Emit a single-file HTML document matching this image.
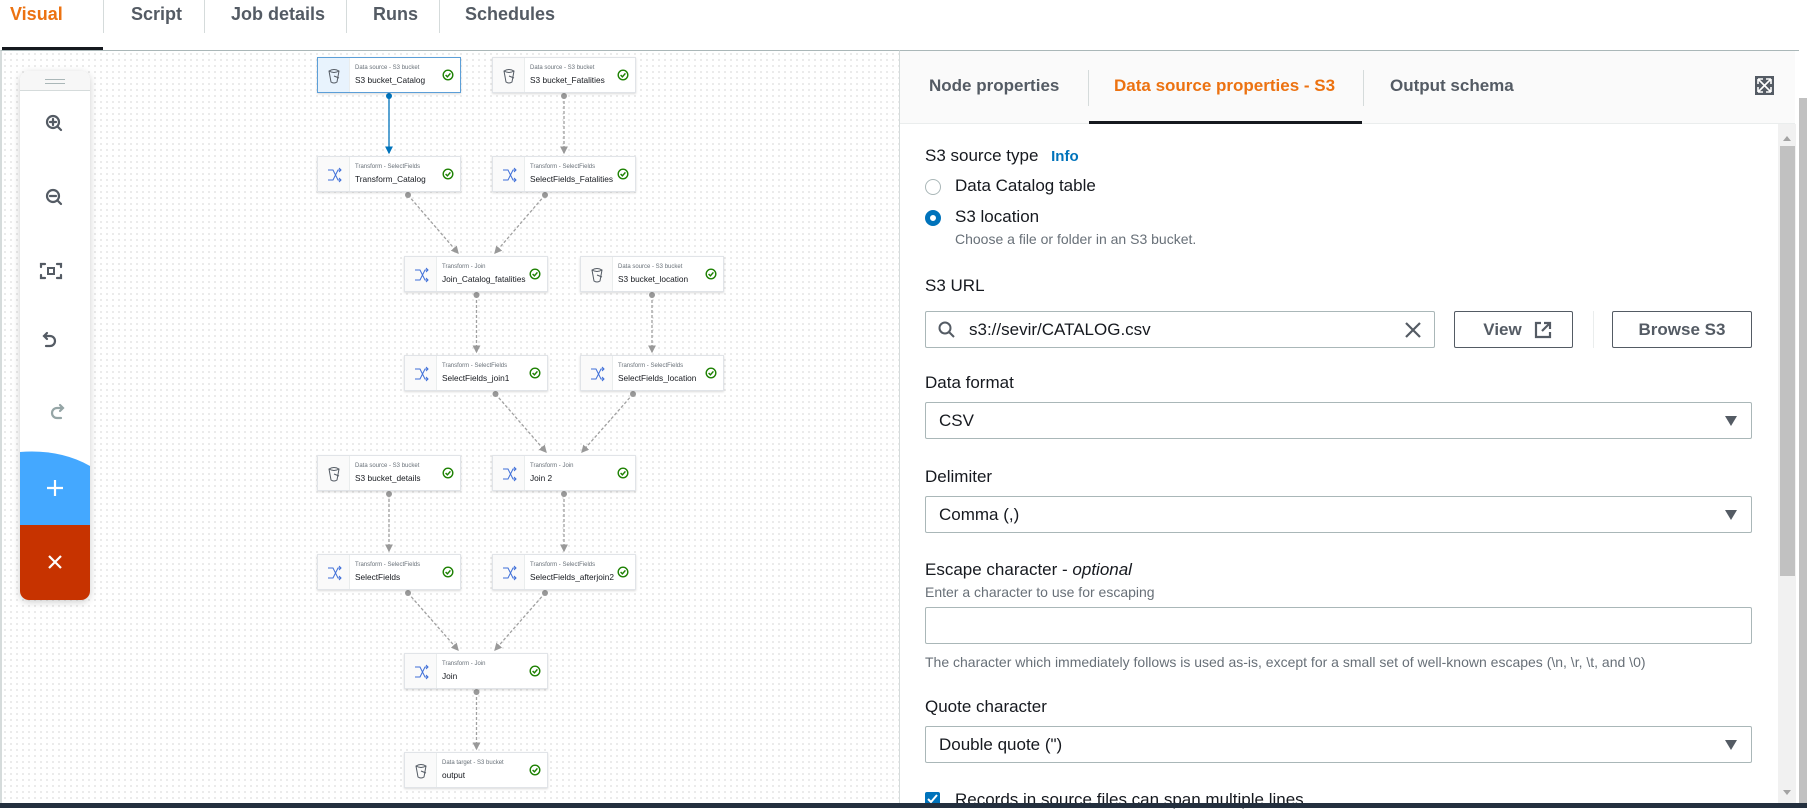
<!DOCTYPE html>
<html><head><meta charset="utf-8"><style>
*{box-sizing:border-box;margin:0;padding:0}
body{width:1807px;height:808px;overflow:hidden;background:#fff;font-family:"Liberation Sans",sans-serif;color:#16191f;position:relative}
.abs{position:absolute}
.tab{position:absolute;top:2px;font-size:18px;font-weight:bold;color:#545b64;height:24px;line-height:24px}
.vsep{position:absolute;width:1px;background:#d5dbdb}
#canvas{position:absolute;left:0;top:50px;width:899px;height:753px;border-top:1px solid #aab7b8;border-left:2px solid #d5dbdb;background-color:#fff;background-image:radial-gradient(circle,#dedede 0.7px,transparent 1px);background-size:6px 6px}
.node{position:absolute;width:144px;height:36px;background:#fff;border:1px solid #e1e4e8;box-shadow:0 1px 2px rgba(0,0,0,.15)}
.node .ic{position:absolute;left:0;top:0;width:32px;height:100%;background:#fafafa;border-right:1px solid #eaeded}
.node .st{position:absolute;left:37px;top:7px;font-size:6px;color:#687078;white-space:nowrap}
.node .tt{position:absolute;left:37px;top:17px;font-size:8.3px;color:#16191f;white-space:nowrap}
.node .ok{position:absolute;left:124px;top:11px}
.node.sel{border-color:#5c9fd8}
.node.sel .ic{background:#e8f3fd}
#tb{position:absolute;left:20px;top:71px;width:70px;height:529px;background:#fff;border-radius:9px;box-shadow:0 2px 8px rgba(0,0,0,.2);overflow:hidden}
.lbl{position:absolute;left:925px;font-size:17px;color:#16191f}
.desc{position:absolute;left:925px;font-size:14px;color:#687078}
.box{position:absolute;left:925px;width:827px;height:37px;border:1px solid #aab7b8;border-radius:2px;background:#fff;font-size:17px;padding-left:13px;line-height:35px}
.box .arr{position:absolute;right:14px;top:13px;width:0;height:0;border-left:6px solid transparent;border-right:6px solid transparent;border-top:10px solid #545b64}
.btn{position:absolute;top:311px;height:37px;border:1px solid #545b64;border-radius:2px;font-size:17px;font-weight:bold;color:#545b64;text-align:center;line-height:35px}
</style></head><body>

<div class="tab" style="left:10px;color:#ec7211">Visual</div>
<div class="tab" style="left:131px">Script</div>
<div class="tab" style="left:231px">Job details</div>
<div class="tab" style="left:373px">Runs</div>
<div class="tab" style="left:465px">Schedules</div>
<div class="vsep" style="left:103px;top:0;height:33px"></div>
<div class="vsep" style="left:204px;top:0;height:33px"></div>
<div class="vsep" style="left:346px;top:0;height:33px"></div>
<div class="vsep" style="left:439px;top:0;height:33px"></div>
<div class="abs" style="left:2px;top:47px;width:101px;height:3px;background:#16191f"></div>

<div id="canvas"></div>

<svg class="abs" style="left:0;top:0" width="899" height="808">
<defs>
<marker id="ag" markerWidth="6" markerHeight="6" refX="5" refY="3" orient="auto"><path d="M0,0 L6,3 L0,6z" fill="#999"/></marker>
<marker id="ab" markerWidth="6" markerHeight="6" refX="5" refY="3" orient="auto"><path d="M0,0 L6,3 L0,6z" fill="#0073bb"/></marker>
</defs>
<g stroke="#a0a0a0" stroke-width="1.3" stroke-dasharray="3,2" fill="none" marker-end="url(#ag)">
<line x1="564" y1="96" x2="564" y2="153"/>
<line x1="408" y1="195" x2="458" y2="253"/>
<line x1="545" y1="195" x2="495" y2="253"/>
<line x1="476.5" y1="295" x2="476.5" y2="352"/>
<line x1="652" y1="295" x2="652" y2="352"/>
<line x1="495.5" y1="394" x2="546" y2="452"/>
<line x1="633" y1="394" x2="582" y2="452"/>
<line x1="389" y1="494" x2="389" y2="551"/>
<line x1="564" y1="494" x2="564" y2="551"/>
<line x1="408" y1="593" x2="458" y2="650"/>
<line x1="545" y1="593" x2="495" y2="650"/>
<line x1="476.5" y1="692" x2="476.5" y2="749"/>
</g>
<line x1="389" y1="96" x2="389" y2="153" stroke="#0073bb" stroke-width="1.3" marker-end="url(#ab)"/>
<g fill="#999">
<circle cx="564" cy="96" r="3"/><circle cx="408" cy="195" r="3"/><circle cx="545" cy="195" r="3"/>
<circle cx="476.5" cy="295" r="3"/><circle cx="652" cy="295" r="3"/><circle cx="495.5" cy="394" r="3"/>
<circle cx="633" cy="394" r="3"/><circle cx="389" cy="494" r="3"/><circle cx="564" cy="494" r="3"/>
<circle cx="408" cy="593" r="3"/><circle cx="545" cy="593" r="3"/><circle cx="476.5" cy="692" r="3"/>
</g>
<circle cx="389" cy="96" r="3" fill="#0073bb"/>
</svg>

<div class="node sel" style="left:317px;top:57px"><div class="ic"><svg width="32" height="36"><path d="M11,13 L13,24 Q16,26 19,24 L21,13 Q16,10 11,13Z M11,13 Q16,16 21,13 M16,18 L21,20" stroke="#545b64" fill="none" stroke-width="1"/></svg></div><div class="st">Data source - S3 bucket</div><div class="tt">S3 bucket_Catalog</div><svg class="ok" width="12" height="12"><circle cx="6" cy="6" r="4.8" stroke="#1d8102" stroke-width="1.4" fill="none"/><path d="M3.6,6 L5.4,7.8 L8.4,4.4" stroke="#1d8102" stroke-width="1.4" fill="none"/></svg></div>
<div class="node" style="left:492px;top:57px"><div class="ic"><svg width="32" height="36"><path d="M11,13 L13,24 Q16,26 19,24 L21,13 Q16,10 11,13Z M11,13 Q16,16 21,13 M16,18 L21,20" stroke="#545b64" fill="none" stroke-width="1"/></svg></div><div class="st">Data source - S3 bucket</div><div class="tt">S3 bucket_Fatalities</div><svg class="ok" width="12" height="12"><circle cx="6" cy="6" r="4.8" stroke="#1d8102" stroke-width="1.4" fill="none"/><path d="M3.6,6 L5.4,7.8 L8.4,4.4" stroke="#1d8102" stroke-width="1.4" fill="none"/></svg></div>

<div class="node" style="left:317px;top:156px"><div class="ic"><svg width="32" height="36"><path d="M10,13 L15,13 L20,23 L23,23 M10,23 L15,23 L20,13 L23,13 M21,11 L23,13 L21,15 M21,21 L23,23 L21,25" stroke="#3f6fd8" fill="none" stroke-width="1"/></svg></div><div class="st">Transform - SelectFields</div><div class="tt">Transform_Catalog</div><svg class="ok" width="12" height="12"><circle cx="6" cy="6" r="4.8" stroke="#1d8102" stroke-width="1.4" fill="none"/><path d="M3.6,6 L5.4,7.8 L8.4,4.4" stroke="#1d8102" stroke-width="1.4" fill="none"/></svg></div>
<div class="node" style="left:492px;top:156px"><div class="ic"><svg width="32" height="36"><path d="M10,13 L15,13 L20,23 L23,23 M10,23 L15,23 L20,13 L23,13 M21,11 L23,13 L21,15 M21,21 L23,23 L21,25" stroke="#3f6fd8" fill="none" stroke-width="1"/></svg></div><div class="st">Transform - SelectFields</div><div class="tt">SelectFields_Fatalities</div><svg class="ok" width="12" height="12"><circle cx="6" cy="6" r="4.8" stroke="#1d8102" stroke-width="1.4" fill="none"/><path d="M3.6,6 L5.4,7.8 L8.4,4.4" stroke="#1d8102" stroke-width="1.4" fill="none"/></svg></div>

<div class="node" style="left:404px;top:256px"><div class="ic"><svg width="32" height="36"><path d="M10,13 L15,13 L20,23 L23,23 M10,23 L15,23 L20,13 L23,13 M21,11 L23,13 L21,15 M21,21 L23,23 L21,25" stroke="#3f6fd8" fill="none" stroke-width="1"/></svg></div><div class="st">Transform - Join</div><div class="tt">Join_Catalog_fatalities</div><svg class="ok" width="12" height="12"><circle cx="6" cy="6" r="4.8" stroke="#1d8102" stroke-width="1.4" fill="none"/><path d="M3.6,6 L5.4,7.8 L8.4,4.4" stroke="#1d8102" stroke-width="1.4" fill="none"/></svg></div>
<div class="node" style="left:580px;top:256px"><div class="ic"><svg width="32" height="36"><path d="M11,13 L13,24 Q16,26 19,24 L21,13 Q16,10 11,13Z M11,13 Q16,16 21,13 M16,18 L21,20" stroke="#545b64" fill="none" stroke-width="1"/></svg></div><div class="st">Data source - S3 bucket</div><div class="tt">S3 bucket_location</div><svg class="ok" width="12" height="12"><circle cx="6" cy="6" r="4.8" stroke="#1d8102" stroke-width="1.4" fill="none"/><path d="M3.6,6 L5.4,7.8 L8.4,4.4" stroke="#1d8102" stroke-width="1.4" fill="none"/></svg></div>

<div class="node" style="left:404px;top:355px"><div class="ic"><svg width="32" height="36"><path d="M10,13 L15,13 L20,23 L23,23 M10,23 L15,23 L20,13 L23,13 M21,11 L23,13 L21,15 M21,21 L23,23 L21,25" stroke="#3f6fd8" fill="none" stroke-width="1"/></svg></div><div class="st">Transform - SelectFields</div><div class="tt">SelectFields_join1</div><svg class="ok" width="12" height="12"><circle cx="6" cy="6" r="4.8" stroke="#1d8102" stroke-width="1.4" fill="none"/><path d="M3.6,6 L5.4,7.8 L8.4,4.4" stroke="#1d8102" stroke-width="1.4" fill="none"/></svg></div>
<div class="node" style="left:580px;top:355px"><div class="ic"><svg width="32" height="36"><path d="M10,13 L15,13 L20,23 L23,23 M10,23 L15,23 L20,13 L23,13 M21,11 L23,13 L21,15 M21,21 L23,23 L21,25" stroke="#3f6fd8" fill="none" stroke-width="1"/></svg></div><div class="st">Transform - SelectFields</div><div class="tt">SelectFields_location</div><svg class="ok" width="12" height="12"><circle cx="6" cy="6" r="4.8" stroke="#1d8102" stroke-width="1.4" fill="none"/><path d="M3.6,6 L5.4,7.8 L8.4,4.4" stroke="#1d8102" stroke-width="1.4" fill="none"/></svg></div>

<div class="node" style="left:317px;top:455px"><div class="ic"><svg width="32" height="36"><path d="M11,13 L13,24 Q16,26 19,24 L21,13 Q16,10 11,13Z M11,13 Q16,16 21,13 M16,18 L21,20" stroke="#545b64" fill="none" stroke-width="1"/></svg></div><div class="st">Data source - S3 bucket</div><div class="tt">S3 bucket_details</div><svg class="ok" width="12" height="12"><circle cx="6" cy="6" r="4.8" stroke="#1d8102" stroke-width="1.4" fill="none"/><path d="M3.6,6 L5.4,7.8 L8.4,4.4" stroke="#1d8102" stroke-width="1.4" fill="none"/></svg></div>
<div class="node" style="left:492px;top:455px"><div class="ic"><svg width="32" height="36"><path d="M10,13 L15,13 L20,23 L23,23 M10,23 L15,23 L20,13 L23,13 M21,11 L23,13 L21,15 M21,21 L23,23 L21,25" stroke="#3f6fd8" fill="none" stroke-width="1"/></svg></div><div class="st">Transform - Join</div><div class="tt">Join 2</div><svg class="ok" width="12" height="12"><circle cx="6" cy="6" r="4.8" stroke="#1d8102" stroke-width="1.4" fill="none"/><path d="M3.6,6 L5.4,7.8 L8.4,4.4" stroke="#1d8102" stroke-width="1.4" fill="none"/></svg></div>

<div class="node" style="left:317px;top:554px"><div class="ic"><svg width="32" height="36"><path d="M10,13 L15,13 L20,23 L23,23 M10,23 L15,23 L20,13 L23,13 M21,11 L23,13 L21,15 M21,21 L23,23 L21,25" stroke="#3f6fd8" fill="none" stroke-width="1"/></svg></div><div class="st">Transform - SelectFields</div><div class="tt">SelectFields</div><svg class="ok" width="12" height="12"><circle cx="6" cy="6" r="4.8" stroke="#1d8102" stroke-width="1.4" fill="none"/><path d="M3.6,6 L5.4,7.8 L8.4,4.4" stroke="#1d8102" stroke-width="1.4" fill="none"/></svg></div>
<div class="node" style="left:492px;top:554px"><div class="ic"><svg width="32" height="36"><path d="M10,13 L15,13 L20,23 L23,23 M10,23 L15,23 L20,13 L23,13 M21,11 L23,13 L21,15 M21,21 L23,23 L21,25" stroke="#3f6fd8" fill="none" stroke-width="1"/></svg></div><div class="st">Transform - SelectFields</div><div class="tt">SelectFields_afterjoin2</div><svg class="ok" width="12" height="12"><circle cx="6" cy="6" r="4.8" stroke="#1d8102" stroke-width="1.4" fill="none"/><path d="M3.6,6 L5.4,7.8 L8.4,4.4" stroke="#1d8102" stroke-width="1.4" fill="none"/></svg></div>

<div class="node" style="left:404px;top:653px"><div class="ic"><svg width="32" height="36"><path d="M10,13 L15,13 L20,23 L23,23 M10,23 L15,23 L20,13 L23,13 M21,11 L23,13 L21,15 M21,21 L23,23 L21,25" stroke="#3f6fd8" fill="none" stroke-width="1"/></svg></div><div class="st">Transform - Join</div><div class="tt">Join</div><svg class="ok" width="12" height="12"><circle cx="6" cy="6" r="4.8" stroke="#1d8102" stroke-width="1.4" fill="none"/><path d="M3.6,6 L5.4,7.8 L8.4,4.4" stroke="#1d8102" stroke-width="1.4" fill="none"/></svg></div>
<div class="node" style="left:404px;top:752px"><div class="ic"><svg width="32" height="36"><path d="M11,13 L13,24 Q16,26 19,24 L21,13 Q16,10 11,13Z M11,13 Q16,16 21,13 M16,18 L21,20" stroke="#545b64" fill="none" stroke-width="1"/></svg></div><div class="st">Data target - S3 bucket</div><div class="tt">output</div><svg class="ok" width="12" height="12"><circle cx="6" cy="6" r="4.8" stroke="#1d8102" stroke-width="1.4" fill="none"/><path d="M3.6,6 L5.4,7.8 L8.4,4.4" stroke="#1d8102" stroke-width="1.4" fill="none"/></svg></div>

<div id="tb">
<div class="abs" style="left:0;top:0;width:70px;height:20px;background:#f7f7f7;border-bottom:1px solid #d5dbdb"></div>
<div class="abs" style="left:25px;top:8px;width:20px;height:1px;background:#aab7b8"></div>
<div class="abs" style="left:25px;top:12px;width:20px;height:1px;background:#aab7b8"></div>
<svg class="abs" style="left:0;top:0" width="70" height="529">
<g stroke="#545b64" stroke-width="2.2" fill="none" stroke-linecap="round">
<circle cx="33" cy="51" r="6"/><line x1="37.5" y1="55.5" x2="41" y2="59"/><line x1="30" y1="51" x2="36" y2="51"/><line x1="33" y1="48" x2="33" y2="54"/>
<circle cx="33" cy="125" r="6"/><line x1="37.5" y1="129.5" x2="41" y2="133"/><line x1="30" y1="125" x2="36" y2="125"/>
<path d="M21,196 v-3 h4 M41,196 v-3 h-4 M21,204 v3 h4 M41,204 v3 h-4"/><rect x="28" y="197" width="6" height="6" stroke-width="2"/>
<path d="M27,268 l-3,-3 l3,-3 M24,265 h6 a5,5 0 0 1 0,10 h-4"/>
</g>
<path d="M40,340 l3,-3 l-3,-3 M43,337 h-6 a5,5 0 0 0 0,10 h4" stroke="#95a5a6" stroke-width="2.2" fill="none" stroke-linecap="round"/>
<path d="M0,381 Q40,378 70,395 L70,454 L0,454Z" fill="#44a8ff"/>
<rect x="0" y="454" width="70" height="75" fill="#c73300"/>
<path d="M35,409 v16 M27,417 h16" stroke="#fff" stroke-width="2.2"/>
<path d="M29,485 l12,12 M41,485 l-12,12" stroke="#fff" stroke-width="2.2"/>
</svg>
</div>

<div class="abs" style="left:0;top:803px;width:1807px;height:5px;background:#232f3e"></div>

<div class="abs" style="left:899px;top:50px;width:900px;height:753px;border-left:1px solid #d5dbdb;border-top:1px solid #aab7b8"></div>
<div class="abs" style="left:900px;top:51px;width:895px;height:73px;background:#fafafa;border-bottom:1px solid #eaeded"></div>
<div class="abs" style="left:929px;top:76px;font-size:17px;font-weight:bold;color:#545b64">Node properties</div>
<div class="abs" style="left:1114px;top:76px;font-size:17px;font-weight:bold;color:#ec7211">Data source properties - S3</div>
<div class="abs" style="left:1390px;top:76px;font-size:17px;font-weight:bold;color:#545b64">Output schema</div>
<div class="vsep" style="left:1088px;top:70px;height:36px"></div>
<div class="vsep" style="left:1363px;top:70px;height:36px"></div>
<div class="abs" style="left:1089px;top:121px;width:273px;height:3px;background:#16191f"></div>
<svg class="abs" style="left:1755px;top:76px" width="19" height="19"><rect width="19" height="19" fill="#545b64"/><path d="M3,3 l13,13 M16,3 l-13,13 M3,3 h5 M3,3 v5 M16,3 h-5 M16,3 v5 M3,16 h5 M3,16 v-5 M16,16 h-5 M16,16 v-5" stroke="#fff" stroke-width="1.6"/></svg>

<div class="abs" style="left:1778px;top:124px;width:18px;height:679px;background:#f1f1f1"></div>
<div class="abs" style="left:1780px;top:146px;width:15px;height:430px;background:#c1c1c1"></div>
<div class="abs" style="left:1783px;top:136px;border-left:4px solid transparent;border-right:4px solid transparent;border-bottom:5px solid #a3a3a3"></div>
<div class="abs" style="left:1783px;top:790px;border-left:4px solid transparent;border-right:4px solid transparent;border-top:5px solid #a3a3a3"></div>
<div class="abs" style="left:1799px;top:98px;width:8px;height:705px;background:#c1c1c1"></div>

<div class="lbl" style="top:146px">S3 source type <span style="color:#0073bb;font-weight:bold;font-size:15px;margin-left:8px">Info</span></div>
<div class="abs" style="left:925px;top:179px;width:16px;height:16px;border:1.5px solid #aab7b8;border-radius:50%"></div>
<div class="lbl" style="left:955px;top:176px">Data Catalog table</div>
<div class="abs" style="left:925px;top:210px;width:16px;height:16px;border:5px solid #0073bb;border-radius:50%"></div>
<div class="lbl" style="left:955px;top:207px">S3 location</div>
<div class="desc" style="left:955px;top:231px">Choose a file or folder in an S3 bucket.</div>

<div class="lbl" style="top:276px">S3 URL</div>
<div class="box" style="top:311px;width:510px;padding-left:43px">s3://sevir/CATALOG.csv
<svg class="abs" style="left:12px;top:9px" width="18" height="18"><circle cx="7" cy="7" r="5.5" stroke="#545b64" stroke-width="2" fill="none"/><path d="M11,11 l5,5" stroke="#545b64" stroke-width="2"/></svg>
<svg class="abs" style="left:478px;top:9px" width="18" height="18"><path d="M2,2 l14,14 M16,2 l-14,14" stroke="#545b64" stroke-width="2.2"/></svg>
</div>
<div class="btn" style="left:1454px;width:119px;padding-right:22px">View
<svg class="abs" style="left:79px;top:9px" width="18" height="18"><path d="M7,2 H2 V16 H16 V11 M10,2 h6 v6 M16,2 l-8,8" stroke="#545b64" stroke-width="2.2" fill="none"/></svg></div>
<div class="vsep" style="left:1593px;top:311px;height:37px;background:#eaeded"></div>
<div class="btn" style="left:1612px;width:140px">Browse S3</div>

<div class="lbl" style="top:373px">Data format</div>
<div class="box" style="top:402px">CSV<div class="arr"></div></div>
<div class="lbl" style="top:467px">Delimiter</div>
<div class="box" style="top:496px">Comma (,)<div class="arr"></div></div>
<div class="lbl" style="top:560px">Escape character - <i>optional</i></div>
<div class="desc" style="top:584px">Enter a character to use for escaping</div>
<div class="box" style="top:607px"></div>
<div class="desc" style="top:654px">The character which immediately follows is used as-is, except for a small set of well-known escapes (\n, \r, \t, and \0)</div>
<div class="lbl" style="top:697px">Quote character</div>
<div class="box" style="top:726px">Double quote (")<div class="arr"></div></div>
<div class="abs" style="left:925px;top:792px;width:15px;height:15px;background:#0073bb;border-radius:2px"></div>
<svg class="abs" style="left:925px;top:792px" width="15" height="11"><path d="M3,7 l3,3 l6,-7" stroke="#fff" stroke-width="2" fill="none"/></svg>
<div class="lbl" style="left:955px;top:790px">Records in source files can span multiple lines</div>
<div class="abs" style="left:0;top:803px;width:1807px;height:5px;background:#232f3e"></div>
</body></html>
